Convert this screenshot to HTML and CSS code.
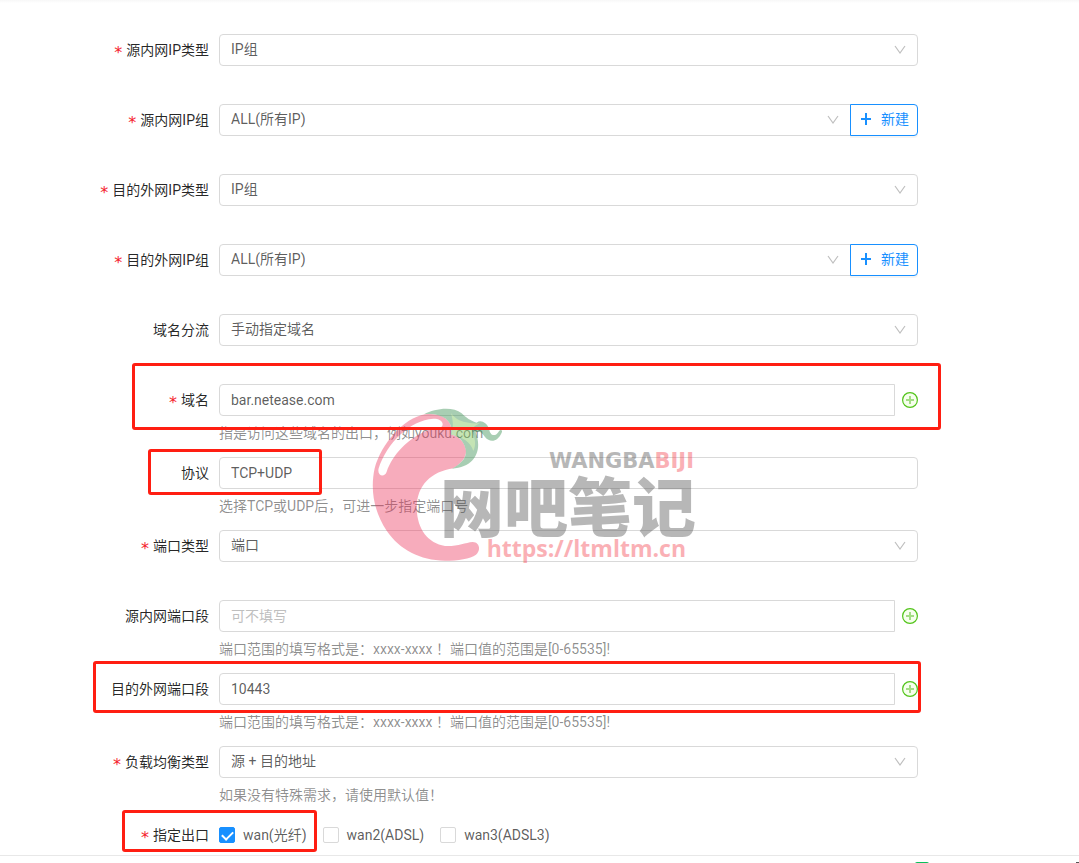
FILE: index.html
```html
<!DOCTYPE html>
<html lang="zh-CN">
<head>
  <meta charset="UTF-8">
  <meta name="viewport" content="width=device-width, initial-scale=1.0">
  <title>端口分流</title>
  <link rel="stylesheet" href="styles.css">
</head>
<body>
  <form class="route-form">
    <div class="row">
      <label class="label required" for="src-type">源内网IP类型</label>
      <div class="select-box">
        <select id="src-type" class="control"><option>IP组</option></select>
        <svg class="arrow" viewBox="0 0 12 12"><path d="M1 2l5 7 5-7"/></svg>
      </div>
    </div>

    <div class="row">
      <label class="label required" for="src-group">源内网IP组</label>
      <div class="group">
        <div class="select-box joined">
          <select id="src-group" class="control"><option>ALL(所有IP)</option></select>
          <svg class="arrow" viewBox="0 0 12 12"><path d="M1 2l5 7 5-7"/></svg>
        </div>
        <button type="button" class="new-button">
          <svg class="plus" viewBox="0 0 10 12"><path d="M5 0v12M0 6h10"/></svg>新建
        </button>
      </div>
    </div>

    <div class="row">
      <label class="label required" for="dst-type">目的外网IP类型</label>
      <div class="select-box">
        <select id="dst-type" class="control"><option>IP组</option></select>
        <svg class="arrow" viewBox="0 0 12 12"><path d="M1 2l5 7 5-7"/></svg>
      </div>
    </div>

    <div class="row">
      <label class="label required" for="dst-group">目的外网IP组</label>
      <div class="group">
        <div class="select-box joined">
          <select id="dst-group" class="control"><option>ALL(所有IP)</option></select>
          <svg class="arrow" viewBox="0 0 12 12"><path d="M1 2l5 7 5-7"/></svg>
        </div>
        <button type="button" class="new-button">
          <svg class="plus" viewBox="0 0 10 12"><path d="M5 0v12M0 6h10"/></svg>新建
        </button>
      </div>
    </div>

    <div class="row">
      <label class="label" for="domain-mode">域名分流</label>
      <div class="select-box">
        <select id="domain-mode" class="control"><option>手动指定域名</option></select>
        <svg class="arrow" viewBox="0 0 12 12"><path d="M1 2l5 7 5-7"/></svg>
      </div>
    </div>

    <div class="row has-help">
      <label class="label required" for="domain">域名</label>
      <div class="group with-add">
        <input id="domain" class="control" type="text" value="bar.netease.com">
        <button type="button" class="add-button" aria-label="添加">
          <svg viewBox="0 0 16 16"><circle cx="8" cy="8" r="7.4"/><path d="M8 4v8M4 8h8"/></svg>
        </button>
      </div>
      <p class="help">指是访问这些域名的出口，例如youku.com</p>
      <div class="mark mark-domain"></div>
    </div>

    <div class="row has-help">
      <label class="label" for="protocol">协议</label>
      <input id="protocol" class="control" type="text" value="TCP+UDP">
      <p class="help">选择TCP或UDP后，可进一步指定端口号</p>
      <div class="mark mark-protocol"></div>
    </div>

    <div class="row">
      <label class="label required" for="port-type">端口类型</label>
      <div class="select-box">
        <select id="port-type" class="control"><option>端口</option></select>
        <svg class="arrow" viewBox="0 0 12 12"><path d="M1 2l5 7 5-7"/></svg>
      </div>
    </div>

    <div class="row has-help">
      <label class="label" for="src-port">源内网端口段</label>
      <div class="group with-add">
        <input id="src-port" class="control" type="text" placeholder="可不填写">
        <button type="button" class="add-button" aria-label="添加">
          <svg viewBox="0 0 16 16"><circle cx="8" cy="8" r="7.4"/><path d="M8 4v8M4 8h8"/></svg>
        </button>
      </div>
      <p class="help">端口范围的填写格式是：xxxx-xxxx ！端口值的范围是[0-65535]!</p>
    </div>

    <div class="row has-help">
      <label class="label" for="dst-port">目的外网端口段</label>
      <div class="group with-add">
        <input id="dst-port" class="control" type="text" value="10443">
        <button type="button" class="add-button" aria-label="添加">
          <svg viewBox="0 0 16 16"><circle cx="8" cy="8" r="7.4"/><path d="M8 4v8M4 8h8"/></svg>
        </button>
      </div>
      <p class="help">端口范围的填写格式是：xxxx-xxxx ！端口值的范围是[0-65535]!</p>
      <div class="mark mark-port"></div>
    </div>

    <div class="row has-help">
      <label class="label required" for="balance">负载均衡类型</label>
      <div class="select-box">
        <select id="balance" class="control"><option>源 + 目的地址</option></select>
        <svg class="arrow" viewBox="0 0 12 12"><path d="M1 2l5 7 5-7"/></svg>
      </div>
      <p class="help">如果没有特殊需求，请使用默认值！</p>
    </div>

    <div class="row last">
      <span class="label required" id="exit-label">指定出口</span>
      <div class="checks" role="group" aria-labelledby="exit-label">
        <label class="check"><input type="checkbox" checked>wan(光纤)</label>
        <label class="check"><input type="checkbox">wan2(ADSL)</label>
        <label class="check"><input type="checkbox">wan3(ADSL3)</label>
      </div>
      <div class="mark mark-exit"></div>
    </div>

    <!-- Watermark -->
    <div class="watermark">
      <svg class="pepper" viewBox="0 0 420 495">
        <path fill="#ed325a" fill-rule="evenodd" d="M165 43C100 55 35 130 14 205C0 270 12 335 50 392C90 450 150 480 225 482C265 482 300 476 318 464C334 450 328 426 308 426C285 428 262 440 225 438C175 430 142 390 140 325C140 255 185 215 250 205C275 190 290 172 288 150C282 122 265 110 243 103C252 60 215 38 165 43ZM190 56C120 60 50 130 26 205C20 228 44 234 50 215C68 165 112 115 175 90C195 84 218 88 218 73C218 62 206 56 190 56Z"/>
        <path fill="#288743" d="M162 43C195 25 248 18 275 40C287 52 303 64 320 68C332 58 350 68 357 86C360 105 374 115 388 92C392 87 399 91 395 98C384 124 361 130 345 111C336 98 329 92 317 97C336 145 321 201 246 206C278 190 291 170 287 149C281 120 263 109 243 103C252 65 219 37 162 43Z"/>
        <path fill="#6ebe46" d="M243 39C255 58 281 72 330 70C312 78 304 87 306 94C314 112 320 133 310 153C302 127 278 111 243 103C253 81 248 59 243 39Z"/>
      </svg>
      <div class="brand">
        <span class="brand-en">WANGBA<b>BIJI</b></span>
        <span class="brand-cn">网吧笔记</span>
        <span class="brand-url">https://ltmltm.cn</span>
      </div>
    </div>
  </form>

  <footer class="bottom-bar"><span class="tab-green"></span><span class="tab-dark"></span></footer>
</body>
</html>
```
FILE: styles.css
```css
* {
  box-sizing: border-box;
}

body {
  margin: 0;
  font-family: Roboto, "Noto Sans CJK SC", sans-serif;
  font-size: 14px;
  line-height: 22px;
  color: rgba(0, 0, 0, 0.65);
  background-color: #fff;
  overflow: hidden;
}

/* Form */
.route-form {
  position: relative;
  padding: 34px 161px 4px 0;
  border-bottom: 1px solid #e8e8e8;
  background: linear-gradient(#f7f7f7, #fff 3px);
}

.row {
  position: relative;
  display: grid;
  grid-template-columns: 209px minmax(0, 1fr);
  grid-template-rows: 32px;
  column-gap: 10px;
  margin-bottom: 38px;
}

.row.has-help {
  margin-bottom: 13px;
}

.row.last {
  margin-bottom: 0;
}

.label {
  display: flex;
  align-items: center;
  justify-content: flex-end;
  padding-bottom: 1px;
  color: rgba(0, 0, 0, 0.85);
}

.required::before {
  content: "*";
  margin-right: 4px;
  padding-top: 6px;
  font: 16px/22px "DejaVu Sans", sans-serif;
  color: #f5222d;
}

.help {
  grid-column: 2;
  height: 22px;
  margin: 6px 0 0;
  color: rgba(0, 0, 0, 0.45);
}

/* Inputs and selects */
.control {
  display: block;
  width: 100%;
  height: 32px;
  margin: 0;
  padding: 0 11px;
  border: 1px solid #d9d9d9;
  border-radius: 4px;
  background-color: #fff;
  font: inherit;
  color: rgba(0, 0, 0, 0.65);
  appearance: none;
  outline: none;
}

select.control {
  padding-bottom: 2px;
}

.control::placeholder {
  color: #bfbfbf;
}

.select-box {
  position: relative;
}

.arrow {
  position: absolute;
  top: 10px;
  right: 12px;
  width: 12px;
  height: 12px;
  fill: none;
  stroke: #bfbfbf;
  stroke-width: 1.2;
  pointer-events: none;
}

.group {
  display: flex;
}

.joined {
  flex: 1;
  margin-right: -1px;
}

.joined .control,
.with-add .control {
  border-radius: 4px 0 0 4px;
}

.new-button {
  position: relative;
  display: flex;
  align-items: center;
  justify-content: space-between;
  width: 68px;
  height: 32px;
  padding: 0 8px 2px 10px;
  border: 1px solid #1890ff;
  border-radius: 0 4px 4px 0;
  background-color: #fff;
  box-shadow: 0 2px 0 rgba(0, 0, 0, 0.04);
  font: inherit;
  color: #1890ff;
  cursor: pointer;
}

.plus {
  width: 10px;
  height: 12px;
  fill: none;
  stroke: #1890ff;
  stroke-width: 2;
}

.with-add {
  align-items: center;
  gap: 7px;
}

.with-add .control {
  flex: 1;
}

.add-button {
  width: 16px;
  height: 16px;
  padding: 0;
  border: 0;
  background: none;
  cursor: pointer;
}

.add-button svg {
  display: block;
}

.add-button circle {
  fill: #f6ffed;
  stroke: #52c41a;
  stroke-width: 1.2;
}

.add-button path {
  stroke: #a3dd84;
  stroke-width: 2;
}

/* Checkboxes */
.checks {
  display: flex;
  align-items: center;
  gap: 16px;
}

.check {
  display: flex;
  align-items: center;
  gap: 8px;
  height: 22px;
}

.check input {
  display: grid;
  place-items: center;
  width: 16px;
  height: 16px;
  margin: 0;
  border: 1px solid #d9d9d9;
  border-radius: 2px;
  background-color: #fff;
  appearance: none;
}

.check input:checked {
  border-color: #1890ff;
  background-color: #1890ff;
}

.check input:checked::after {
  content: "";
  width: 5px;
  height: 9px;
  border: solid #fff;
  border-width: 0 2px 2px 0;
  transform: translateY(-1px) rotate(45deg);
}

/* Red highlight boxes */
.mark {
  position: absolute;
  z-index: 2;
  border: 3px solid #ff1e12;
  border-radius: 3px;
  pointer-events: none;
}

.mark-domain {
  top: -21px;
  left: 132px;
  right: -23px;
  height: 67px;
}

.mark-protocol {
  top: -8px;
  left: 148px;
  width: 174px;
  height: 46px;
}

.mark-port {
  top: -12px;
  left: 93px;
  right: -3px;
  height: 52px;
}

.mark-exit {
  top: -9px;
  left: 122px;
  width: 195px;
  height: 42px;
}

/* Watermark */
.watermark {
  position: absolute;
  top: 400px;
  left: 370px;
  z-index: 1;
  opacity: 0.4;
  pointer-events: none;
}

.pepper {
  display: block;
  width: 140px;
  height: 165px;
}

.brand {
  position: absolute;
  top: 50px;
  left: 70px;
  display: flex;
  flex-direction: column;
  width: 260px;
  color: #4d4d4d;
}

.brand-en {
  align-self: flex-end;
  margin-right: 6px;
  font: bold 21px/22px "DejaVu Sans", sans-serif;
}

.brand-en b,
.brand-url {
  color: #f53b48;
}

.brand-cn {
  font: 900 64px/62px "Noto Sans CJK SC", sans-serif;
}

.brand-url {
  align-self: flex-end;
  margin-right: 14px;
  font: bold 23px/28px "Open Sans", sans-serif;
}

/* Bottom bar */
.bottom-bar {
  display: flex;
  justify-content: flex-end;
  align-items: flex-start;
  gap: 147px;
  padding-top: 6px;
}

.tab-green {
  width: 14px;
  height: 14px;
  border-radius: 2px;
  background-color: #0abf5b;
}

.tab-dark {
  width: 3px;
  height: 14px;
  background-color: #555;
}
```
